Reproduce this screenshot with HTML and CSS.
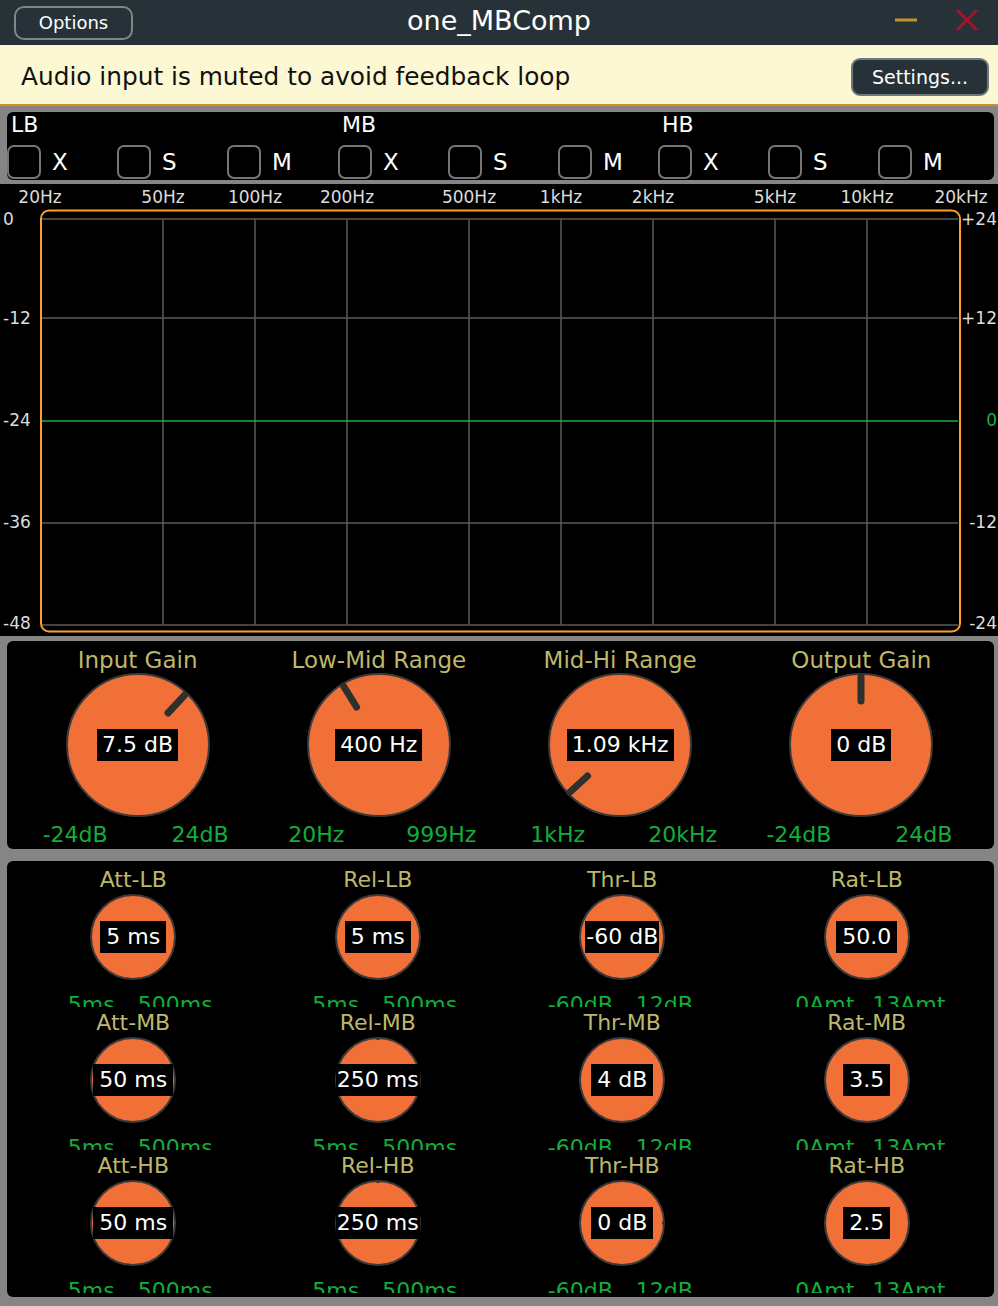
FILE: index.html
```html
<!DOCTYPE html>
<html lang="en">
<head>
<meta charset="UTF-8">
<meta name="viewport" content="width=device-width, initial-scale=1">
<title>one_MBComp</title>
<link rel="stylesheet" href="styles.css">
</head>
<body>
<header class="titlebar">
  <div class="tb-left"><button class="opt-btn">Options</button></div>
  <div class="title">one_MBComp</div>
  <div class="tb-right">
    <svg class="ico-min" width="24" height="8" viewBox="0 0 24 8"><line x1="1" y1="4" x2="23" y2="4"/></svg>
    <svg class="ico-close" width="24" height="24" viewBox="0 0 24 24"><line x1="2" y1="2" x2="22" y2="22"/><line x1="22" y1="2" x2="2" y2="22"/></svg>
  </div>
</header>

<div class="notice">
  <span class="notice-text">Audio input is muted to avoid feedback loop</span>
  <button class="set-btn">Settings...</button>
</div>

<main class="plugin">
  <section class="bands">
    <div class="band band-lb">
      <div class="band-name">LB</div>
      <div class="checks">
        <label class="chk"><span class="box"></span>X</label>
        <label class="chk"><span class="box"></span>S</label>
        <label class="chk"><span class="box"></span>M</label>
      </div>
    </div>
    <div class="band band-mb">
      <div class="band-name">MB</div>
      <div class="checks">
        <label class="chk"><span class="box"></span>X</label>
        <label class="chk"><span class="box"></span>S</label>
        <label class="chk chk-short"><span class="box"></span>M</label>
      </div>
    </div>
    <div class="band band-hb">
      <div class="band-name">HB</div>
      <div class="checks">
        <label class="chk"><span class="box"></span>X</label>
        <label class="chk"><span class="box"></span>S</label>
        <label class="chk"><span class="box"></span>M</label>
      </div>
    </div>
  </section>

  <svg class="graph" width="998" height="452" viewBox="0 0 998 452">
    <g class="freq">
      <text x="40" y="13">20Hz</text>
      <text x="163" y="13">50Hz</text>
      <text x="255" y="13">100Hz</text>
      <text x="347" y="13">200Hz</text>
      <text x="469" y="13">500Hz</text>
      <text x="561" y="13">1kHz</text>
      <text x="653" y="13">2kHz</text>
      <text x="775" y="13">5kHz</text>
      <text x="867" y="13">10kHz</text>
      <text x="961" y="13">20kHz</text>
    </g>
    <g class="grid">
      <line x1="42" y1="35" x2="958" y2="35"/>
      <line x1="42" y1="134" x2="958" y2="134"/>
      <line x1="42" y1="339" x2="958" y2="339"/>
      <line x1="42" y1="441" x2="958" y2="441"/>
      <line x1="163" y1="35" x2="163" y2="441"/>
      <line x1="255" y1="35" x2="255" y2="441"/>
      <line x1="347" y1="35" x2="347" y2="441"/>
      <line x1="469" y1="35" x2="469" y2="441"/>
      <line x1="561" y1="35" x2="561" y2="441"/>
      <line x1="653" y1="35" x2="653" y2="441"/>
      <line x1="775" y1="35" x2="775" y2="441"/>
      <line x1="867" y1="35" x2="867" y2="441"/>
    </g>
    <line class="zero" x1="42" y1="237" x2="958" y2="237"/>
    <rect class="frame" x="41" y="26.5" width="919" height="421" rx="8"/>
    <g class="axis-l">
      <text x="3" y="35">0</text>
      <text x="3" y="134">-12</text>
      <text x="3" y="236">-24</text>
      <text x="3" y="338">-36</text>
      <text x="3" y="439">-48</text>
    </g>
    <g class="axis-r">
      <text x="997" y="35">+24</text>
      <text x="997" y="134">+12</text>
      <text class="g" x="997" y="236">0</text>
      <text x="997" y="338">-12</text>
      <text x="997" y="439">-24</text>
    </g>
  </svg>

  <section class="panel main-knobs">
    <div class="kcol">
      <div class="ktitle">Input Gain</div>
      <div class="knob knob-lg">
        <svg class="dial" viewBox="0 0 144 144"><circle cx="72" cy="72" r="71"/><line x1="102" y1="40" x2="118.4" y2="22.3"/></svg>
        <span class="val">7.5 dB</span>
      </div>
      <div class="range"><span>-24dB</span><span>24dB</span></div>
    </div>
    <div class="kcol">
      <div class="ktitle">Low-Mid Range</div>
      <div class="knob knob-lg">
        <svg class="dial" viewBox="0 0 144 144"><circle cx="72" cy="72" r="71"/><line x1="49.5" y1="34" x2="36.5" y2="13"/></svg>
        <span class="val">400 Hz</span>
      </div>
      <div class="range"><span>20Hz</span><span>999Hz</span></div>
    </div>
    <div class="kcol">
      <div class="ktitle">Mid-Hi Range</div>
      <div class="knob knob-lg">
        <svg class="dial" viewBox="0 0 144 144"><circle cx="72" cy="72" r="71"/><line x1="39.5" y1="103" x2="21.5" y2="119.5"/></svg>
        <span class="val">1.09 kHz</span>
      </div>
      <div class="range"><span>1kHz</span><span>20kHz</span></div>
    </div>
    <div class="kcol">
      <div class="ktitle">Output Gain</div>
      <div class="knob knob-lg">
        <svg class="dial" viewBox="0 0 144 144"><circle cx="72" cy="72" r="71"/><line x1="72" y1="28" x2="72" y2="4"/></svg>
        <span class="val">0 dB</span>
      </div>
      <div class="range"><span>-24dB</span><span>24dB</span></div>
    </div>
  </section>

  <section class="panel comp-knobs">
    <div class="cell">
      <div class="ctitle">Att-LB</div>
      <div class="knob knob-sm"><svg class="dial" viewBox="0 0 86 86"><circle cx="43" cy="43" r="42"/></svg><span class="val">5 ms</span></div>
      <div class="range"><span>5ms</span><span>500ms</span></div>
    </div>
    <div class="cell">
      <div class="ctitle">Rel-LB</div>
      <div class="knob knob-sm"><svg class="dial" viewBox="0 0 86 86"><circle cx="43" cy="43" r="42"/></svg><span class="val">5 ms</span></div>
      <div class="range"><span>5ms</span><span>500ms</span></div>
    </div>
    <div class="cell">
      <div class="ctitle">Thr-LB</div>
      <div class="knob knob-sm"><svg class="dial" viewBox="0 0 86 86"><circle cx="43" cy="43" r="42"/></svg><span class="val tight">-60 dB</span></div>
      <div class="range"><span>-60dB</span><span>12dB</span></div>
    </div>
    <div class="cell">
      <div class="ctitle">Rat-LB</div>
      <div class="knob knob-sm"><svg class="dial" viewBox="0 0 86 86"><circle cx="43" cy="43" r="42"/></svg><span class="val">50.0</span></div>
      <div class="range"><span>0Amt</span><span>13Amt</span></div>
    </div>

    <div class="cell">
      <div class="ctitle">Att-MB</div>
      <div class="knob knob-sm"><svg class="dial" viewBox="0 0 86 86"><circle cx="43" cy="43" r="42"/></svg><span class="val">50 ms</span></div>
      <div class="range"><span>5ms</span><span>500ms</span></div>
    </div>
    <div class="cell">
      <div class="ctitle">Rel-MB</div>
      <div class="knob knob-sm"><svg class="dial" viewBox="0 0 86 86"><circle cx="43" cy="43" r="42"/><line class="nub" x1="43" y1="1.5" x2="43" y2="3"/></svg><span class="val tight">250 ms</span></div>
      <div class="range"><span>5ms</span><span>500ms</span></div>
    </div>
    <div class="cell">
      <div class="ctitle">Thr-MB</div>
      <div class="knob knob-sm"><svg class="dial" viewBox="0 0 86 86"><circle cx="43" cy="43" r="42"/></svg><span class="val">4 dB</span></div>
      <div class="range"><span>-60dB</span><span>12dB</span></div>
    </div>
    <div class="cell">
      <div class="ctitle">Rat-MB</div>
      <div class="knob knob-sm"><svg class="dial" viewBox="0 0 86 86"><circle cx="43" cy="43" r="42"/></svg><span class="val">3.5</span></div>
      <div class="range"><span>0Amt</span><span>13Amt</span></div>
    </div>

    <div class="cell">
      <div class="ctitle">Att-HB</div>
      <div class="knob knob-sm"><svg class="dial" viewBox="0 0 86 86"><circle cx="43" cy="43" r="42"/></svg><span class="val">50 ms</span></div>
      <div class="range"><span>5ms</span><span>500ms</span></div>
    </div>
    <div class="cell">
      <div class="ctitle">Rel-HB</div>
      <div class="knob knob-sm"><svg class="dial" viewBox="0 0 86 86"><circle cx="43" cy="43" r="42"/><line class="nub" x1="43" y1="1.5" x2="43" y2="3"/></svg><span class="val tight">250 ms</span></div>
      <div class="range"><span>5ms</span><span>500ms</span></div>
    </div>
    <div class="cell">
      <div class="ctitle">Thr-HB</div>
      <div class="knob knob-sm"><svg class="dial" viewBox="0 0 86 86"><circle cx="43" cy="43" r="42"/><line class="nub" x1="83" y1="43" x2="84.5" y2="43"/></svg><span class="val">0 dB</span></div>
      <div class="range"><span>-60dB</span><span>12dB</span></div>
    </div>
    <div class="cell">
      <div class="ctitle">Rat-HB</div>
      <div class="knob knob-sm"><svg class="dial" viewBox="0 0 86 86"><circle cx="43" cy="43" r="42"/></svg><span class="val">2.5</span></div>
      <div class="range"><span>0Amt</span><span>13Amt</span></div>
    </div>
  </section>
</main>
</body>
</html>
```

FILE: styles.css
```css
html,body{margin:0;padding:0;}
body{width:998px;height:1306px;overflow:hidden;background:#858585;font-family:"DejaVu Sans",sans-serif;}

/* title bar */
.titlebar{height:45px;background:#263238;display:grid;grid-template-columns:1fr auto 1fr;align-items:center;}
.tb-left{padding-left:14px;}
.opt-btn{width:119px;height:34px;box-sizing:border-box;background:#263238;border:2px solid #7f878b;border-radius:10px;color:#fff;font-family:inherit;font-size:18px;padding:0;}
.title{color:#fff;font-size:27px;margin-top:-5px;}
.tb-right{display:flex;justify-content:flex-end;align-items:center;padding-right:19px;gap:37px;margin-top:-6px;}
.ico-min line{stroke:#c3922a;stroke-width:3;}
.ico-close line{stroke:#a8112b;stroke-width:2.6;}

/* muted notice */
.notice{height:59px;box-sizing:border-box;padding:4px 9px 0 21px;background:#fbf8d3;border-bottom:2px solid #d0912a;display:flex;align-items:center;justify-content:space-between;height:61px;}
.notice-text{font-size:24.8px;color:#111;}
.set-btn{width:138px;height:38px;box-sizing:border-box;background:#263238;border:2px solid #6c7a80;border-radius:9px;color:#fff;font-family:inherit;font-size:19px;padding:0;}

/* band switches */
.bands{margin:6px 4px 4px 7px;height:68px;background:#000;border-radius:6px;display:flex;}
.band{display:flex;flex-direction:column;}
.band-lb{width:331px;}
.band-mb{width:320px;}
.band-hb{flex:1;}
.band-name{height:33px;line-height:26px;padding-left:4px;color:#fff;font-size:22px;}
.checks{display:flex;}
.chk{width:110px;display:flex;align-items:center;color:#fff;font-size:23px;}
.chk-short{width:100px;}
.box{width:34px;height:34px;box-sizing:border-box;border:2px solid #767676;border-radius:7px;margin-right:11px;}

/* response graph */
.graph{display:block;background:#000;}
.graph text{font-family:"DejaVu Sans",sans-serif;font-size:17px;fill:#dcdcdc;dominant-baseline:central;}
.freq text{text-anchor:middle;}
.axis-r text{text-anchor:end;}
.axis-r .g{fill:#1fae3e;}
.grid line{stroke:#5a5a5a;stroke-width:1.5;}
.zero{stroke:#1fae3e;stroke-width:1.5;}
.frame{fill:none;stroke:#fb9e2c;stroke-width:2;}

/* knob panels */
.panel{background:#000;border-radius:6px;}
.main-knobs{margin:5px 4px 0 7px;height:208px;box-sizing:border-box;padding:5px 12px 0 10px;display:grid;grid-template-columns:repeat(4,minmax(0,1fr));}
.kcol{display:flex;flex-direction:column;align-items:center;}
.kcol > *{flex-shrink:0;}
.ktitle{color:#bdb76b;font-size:23px;line-height:28px;}
.knob{position:relative;display:flex;align-items:center;justify-content:center;}
.knob-lg{width:144px;height:144px;margin-top:-1px;}
.knob-sm{width:86px;height:86px;margin-top:1px;}
.dial{position:absolute;left:0;top:0;width:100%;height:100%;overflow:visible;}
.dial circle{fill:#f07038;stroke:#3a3a3a;stroke-width:2;}
.knob-lg line{stroke:#2d302d;stroke-width:7;stroke-linecap:round;}
.dial .nub{stroke:#2d302d;stroke-width:3;}
.val{position:relative;background:#000;color:#fff;font-size:22px;line-height:32px;padding:0 5px;white-space:nowrap;}
.knob-sm .val{padding:0 6px;}
.knob-sm .val.tight{padding:0 1px;}
.range{display:grid;grid-template-columns:125px 125px;justify-content:center;text-align:center;color:#13ad3a;font-size:22px;line-height:28px;margin-top:4px;}

.comp-knobs{margin:12px 4px 0 7px;height:436px;box-sizing:border-box;padding:3px 5px 0 4px;display:grid;grid-template-columns:repeat(4,minmax(0,1fr));grid-template-rows:repeat(3,143px);}
.cell{display:flex;flex-direction:column;align-items:center;overflow:hidden;}
.cell > *{flex-shrink:0;}
.ctitle{color:#bdb76b;font-size:22px;line-height:26px;padding-top:3px;}
.cell .range{grid-template-columns:84px 84px;line-height:26px;margin-top:12px;}
```
